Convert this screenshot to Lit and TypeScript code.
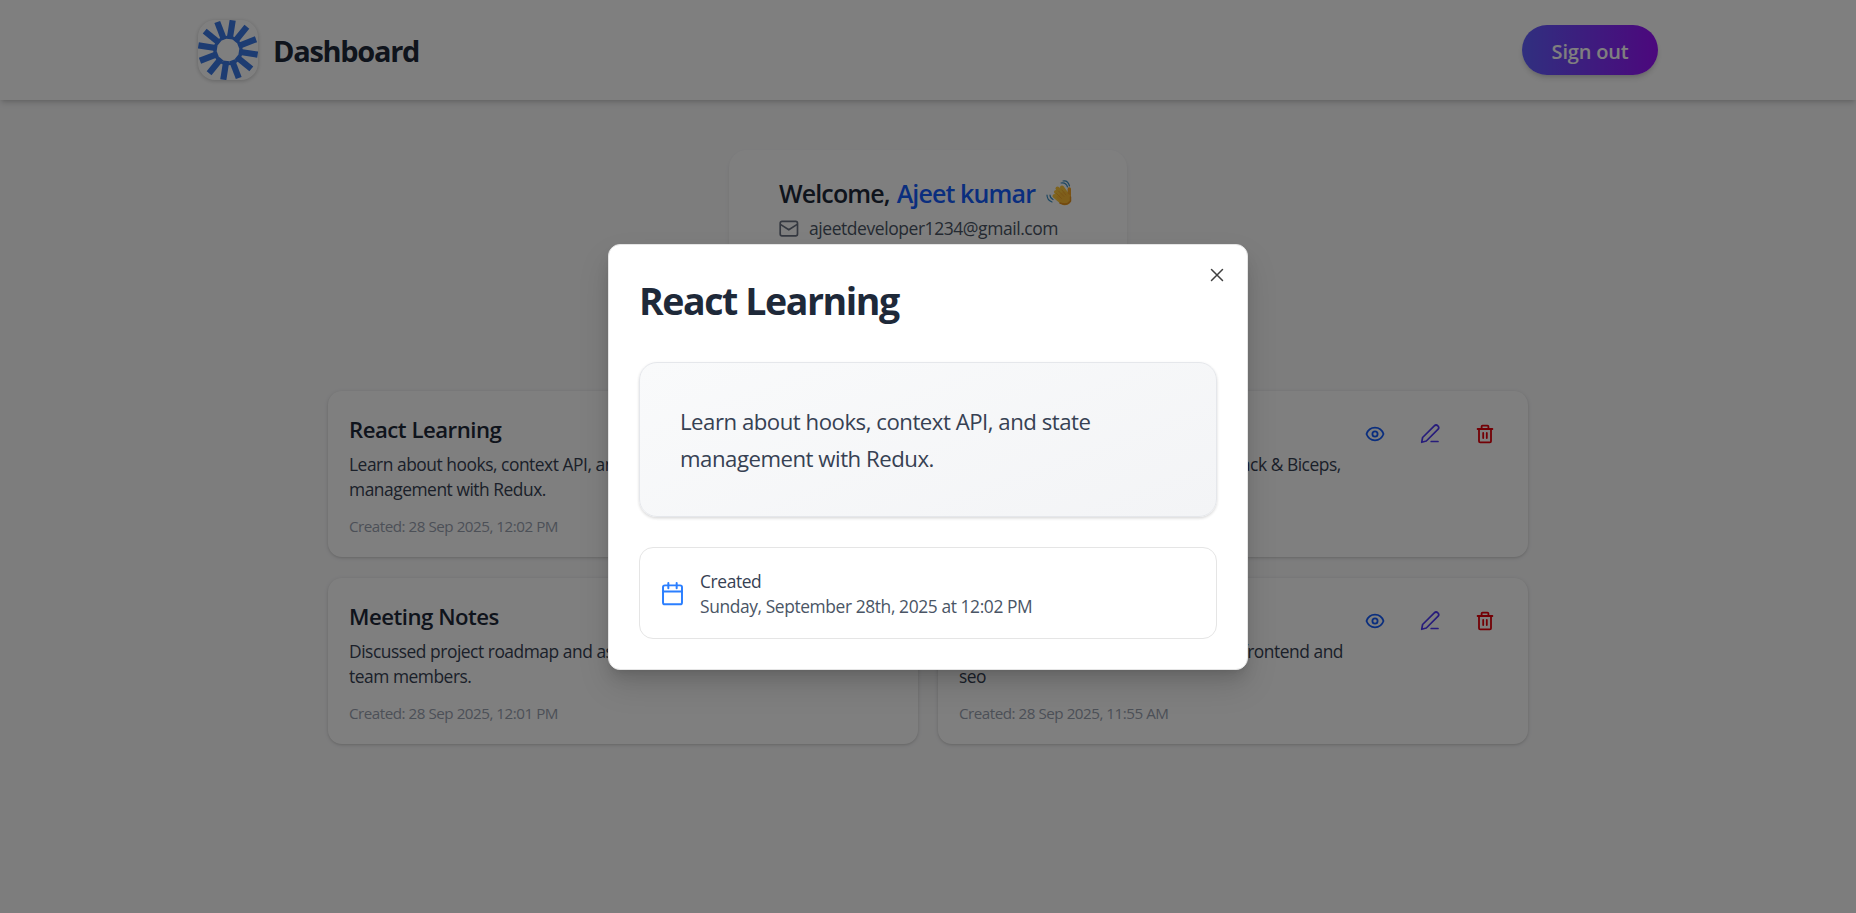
import { LitElement, html, css, svg } from "lit";
import { customElement } from "lit/decorators.js";

interface Note {
  title: string;
  lines: string[];
  created: string;
}

const notes: Note[] = [
  {
    title: "React Learning",
    lines: ["Learn about hooks, context API, and state", "management with Redux."],
    created: "28 Sep 2025, 12:02 PM",
  },
  {
    title: "",
    lines: ["Chest & Triceps, Legs & Shoulders,\u00a0 Back & Biceps,"],
    created: "",
  },
  {
    title: "Meeting Notes",
    lines: ["Discussed project roadmap and assigned tasks to", "team members."],
    created: "28 Sep 2025, 12:01 PM",
  },
  {
    title: "",
    lines: ["Build personal website,\u00a0 improve the frontend and", "seo"],
    created: "28 Sep 2025, 11:55 AM",
  },
];

const rays = Array.from({ length: 12 }, (_, i) => 9 + i * 30);

@customElement("app-root")
export class AppRoot extends LitElement {
  static styles = css`
    :host {
      display: block;
      position: relative;
      height: 913px;
      overflow: hidden;
      background: #fafafb;
      font-family: "Open Sans", "Noto Sans", sans-serif;
      color: #1e2939;
    }
    * { box-sizing: border-box; margin: 0; }
    svg { display: block; flex-shrink: 0; fill: none; stroke: currentColor; stroke-linecap: round; stroke-linejoin: round; }
    .header {
      height: 100px;
      padding: 0 198px;
      display: flex;
      align-items: center;
      justify-content: space-between;
      background: #fff;
      box-shadow: 0 4px 6px -1px rgba(0,0,0,.14), 0 2px 4px -2px rgba(0,0,0,.14);
    }
    .brand { display: flex; align-items: center; gap: 15px; }
    .logo { width: 60px; height: 60px; border-radius: 17px; overflow: hidden; box-shadow: 0 1px 4px rgba(0,0,0,.22); }
    .logo svg { stroke: #3b78e4; stroke-linecap: butt; }
    .brand-name { font-size: 29px; line-height: 40px; font-weight: 700; color: #1e2939; letter-spacing: -1.3px; padding-top: 2px; white-space: nowrap; }
    .signout {
      width: 136px; height: 50px; border: 0; border-radius: 25px; padding: 3px 0 0;
      font-family: inherit; font-size: 20px; line-height: 26px; font-weight: 600; letter-spacing: -.2px; color: #fff;
      background: linear-gradient(90deg, #615fff, #9810fa);
      box-shadow: 0 4px 6px -1px rgba(0,0,0,.14), 0 2px 4px -2px rgba(0,0,0,.14);
    }
    .main { display: flex; flex-direction: column; align-items: center; padding-top: 50px; }
    .welcome {
      width: 398px; height: 130px; padding: 26px 50px; border-radius: 18px; background: #fff;
      box-shadow: 0 4px 6px -1px rgba(0,0,0,.06), 0 1px 3px rgba(0,0,0,.05);
    }
    .hello { font-size: 25px; line-height: 35px; font-weight: 600; letter-spacing: -.88px; white-space: nowrap; display: flex; align-items: center; }
    .hello-name { color: #155dfc; margin-left: 7px; }
    .wave { width: 28px; height: 28px; margin-left: 9.500px; }
    .mail { display: flex; align-items: center; gap: 10px; font-size: 17.500px; line-height: 25px; color: #4a5565; margin-top: 5px; white-space: nowrap; }
    .mail svg { color: #6a7282; }
    .mail-text { letter-spacing: -.44px; }
    .notes { display: grid; grid-template-columns: 590px 590px; gap: 20.500px 20px; margin-top: 110.500px; }
    .card {
      height: 166.500px; padding: 22.500px 21px; border-radius: 14px; background: #fff; display: flex; justify-content: space-between;
      box-shadow: 0 1px 4px rgba(0,0,0,.13), 0 1px 2px rgba(0,0,0,.08);
    }
    .card-text { min-width: 0; flex: 1; }
    .card-title { font-size: 22.200px; line-height: 32px; min-height: 33px; font-weight: 600; letter-spacing: -.5px; padding-top: 1px; }
    .card-line { font-size: 17.400px; line-height: 25px; color: #364153; letter-spacing: -.47px; white-space: nowrap; }
    .card-body { padding-top: 6px; }
    .card-date { font-size: 15.200px; line-height: 22px; color: #99a1af; letter-spacing: -.48px; margin-top: 13px; white-space: nowrap; }
    .actions { display: flex; gap: 35px; padding: 11px 12px 0 0; }
    .view { color: #155dfc; }
    .edit { color: #4f39f6; }
    .remove { color: #e7000b; }
    .overlay {
      position: absolute; inset: 0; background: rgba(0,0,0,.5);
      display: flex; align-items: center; justify-content: center;
    }
    .modal {
      position: relative; width: 640px; height: 426px; padding: 31px 30px; margin-top: 1px;
      background: #fff; border: 1px solid #e5e5e5; border-radius: 12px;
      box-shadow: 0 10px 15px -3px rgba(0,0,0,.1), 0 4px 6px -4px rgba(0,0,0,.1), 0 16px 32px rgba(0,0,0,.12);
    }
    .close { position: absolute; right: 20px; top: 20px; color: #404040; }
    .modal-title { font-size: 37.500px; line-height: 49px; height: 50px; font-weight: 700; letter-spacing: -1.430px; white-space: nowrap; }
    .content {
      height: 155px; margin-top: 36px; padding: 40px; border: 1px solid #e5e7eb; border-radius: 18px;
      background: linear-gradient(160deg, #f9fafb, #f3f4f6);
      box-shadow: 0 1px 3px rgba(0,0,0,.1), 0 2px 3px rgba(0,0,0,.06);
    }
    .content-line { font-size: 22.200px; line-height: 37px; color: #364153; letter-spacing: -.48px; white-space: nowrap; }
    .meta {
      height: 92px; margin-top: 30px; padding: 1px 20px 0; border: 1px solid #e5e5e5; border-radius: 14px;
      display: flex; align-items: center; gap: 15px;
    }
    .meta svg { color: #2b7fff; }
    .meta-label, .meta-value { font-size: 17.400px; line-height: 25px; letter-spacing: -.4px; white-space: nowrap; }
    .meta-label { color: #364153; }
    .meta-value { color: #4a5565; }
  `;

  private card(n: Note) {
    return html`<article class="card">
      <div class="card-text">
        <h2 class="card-title">${n.title}</h2>
        <div class="card-body">${n.lines.map((l) => html`<p class="card-line">${l}</p>`)}</div>
        ${n.created ? html`<p class="card-date">Created: ${n.created}</p>` : null}
      </div>
      <div class="actions">
        <svg class="view" width="20" height="20" viewBox="0 0 20 20" stroke-width="1.8">
          <path d="M1.500 10C3.100 5.600 6.200 3.700 10 3.700s6.900 1.900 8.500 6.300c-1.600 4.400-4.700 6.300-8.500 6.300S3.100 14.400 1.500 10Z" /><circle cx="10" cy="10" r="2.600" />
        </svg>
        <svg class="edit" width="20" height="20" viewBox="0 0 20 20" stroke-width="1.700">
          <path d="M1.700 18.300l.9-4.800L14.300 1.900a2.400 2.400 0 0 1 3.600 3.500L6.300 17z M11.200 17.500h6.800" />
        </svg>
        <svg class="remove" width="20" height="20" viewBox="0 0 20 20" stroke-width="1.800">
          <path d="M2.600 5h14.800M4 5v12.200c0 .7.400 1.100 1.100 1.100h9.800c.7 0 1.100-.4 1.100-1.100V5M6.600 5V2.500c0-.6.300-.9.900-.9h5c.6 0 .9.300.9.900V5M8.200 9v5M11.800 9v5" />
        </svg>
      </div>
    </article>`;
  }

  render() {
    return html`
      <header class="header">
        <div class="brand">
          <div class="logo">
            <svg width="60" height="60" viewBox="0 0 60 60" stroke-width="6.200">
              ${rays.map((a) => svg`<path d="M30 19V0" transform="rotate(${a} 30 30)" />`)}
              <circle cx="30" cy="30.500" r="13.500" stroke-width="2.500" />
            </svg>
          </div>
          <h1 class="brand-name">Dashboard</h1>
        </div>
        <button class="signout">Sign out</button>
      </header>
      <main class="main">
        <section class="welcome">
          <div class="hello">Welcome,<span class="hello-name">Ajeet kumar</span>
            <svg class="wave" viewBox="0 0 28 28">
              <path d="M11 12l7 7M12.500 8.500l8 8M17 7.500l5 7M9.500 16l7 6" stroke="#ffc83d" stroke-width="4" />
              <path d="M24.300 9v8" stroke="#f5a62a" stroke-width="3.400" />
              <path d="M11 17l8-6 6.500 4.500V22q-2.500 4-7.500 3z" fill="#ffbd35" stroke="none" />
              <path d="M15 23q7 3 10.500-2v-4" stroke="#e59220" stroke-width="1.500" />
              <path d="M11.500 13.500l5 5M13.500 11l5.500 5.500M17 10l4 5" stroke="#ee9e26" stroke-width=".7" />
              <path d="M2 15q0 5 5 7M5 15q0 3 3 4.500M16 3q5-1 6.500 4M18 1q5-1 6.500 5" stroke="#3a8fc5" stroke-width="1.200" />
            </svg>
          </div>
          <div class="mail">
            <svg width="20" height="20" viewBox="0 0 20 20" stroke-width="1.700">
              <rect x="1.200" y="2.400" width="17.300" height="14.400" rx="1.800" /><path d="M1.800 5.600l8 5.200L17.800 5.600" />
            </svg>
            <span class="mail-text">ajeetdeveloper1234@gmail.com</span>
          </div>
        </section>
        <section class="notes">${notes.map((n) => this.card(n))}</section>
      </main>
      <div class="overlay">
        <div class="modal" role="dialog">
          <svg class="close" width="20" height="20" viewBox="0 0 20 20" stroke-width="1.500"><path d="M4.500 4.500l11 11M15.500 4.500l-11 11" /></svg>
          <h2 class="modal-title">React Learning</h2>
          <div class="content">
            <p class="content-line">Learn about hooks, context API, and state</p>
            <p class="content-line">management with Redux.</p>
          </div>
          <div class="meta">
            <svg width="25" height="25" viewBox="0 0 24 24" stroke-width="1.900">
              <rect x="2.900" y="4.200" width="18.200" height="18.200" rx="1.800" /><path d="M2.900 10h18.200M8 2v5M16 2v5" />
            </svg>
            <div>
              <p class="meta-label">Created</p>
              <p class="meta-value">Sunday, September 28th, 2025 at 12:02 PM</p>
            </div>
          </div>
        </div>
      </div>
    `;
  }
}
